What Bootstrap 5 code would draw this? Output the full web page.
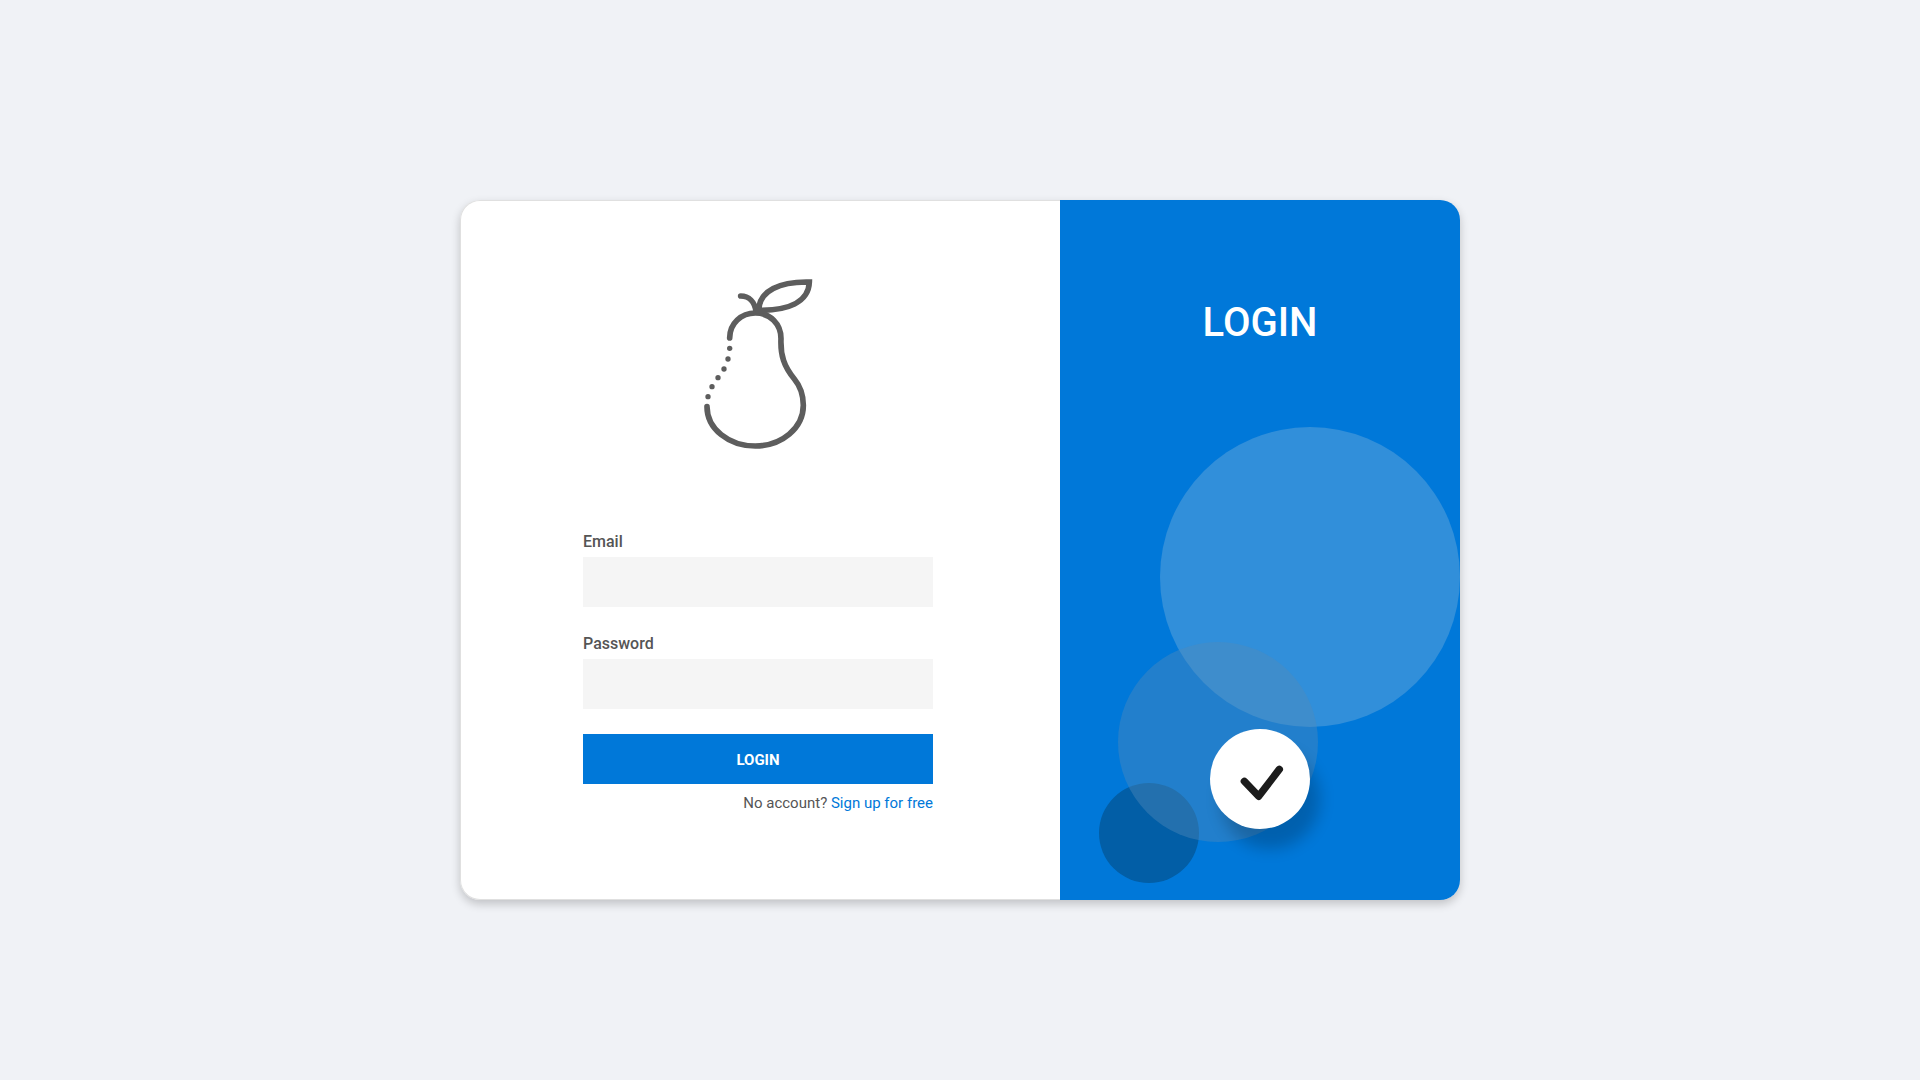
<!DOCTYPE html>
<html lang="en">
<head>
<meta charset="utf-8">
<meta name="viewport" content="width=device-width, initial-scale=1">
<title>Login</title>
<link href="https://cdn.jsdelivr.net/npm/bootstrap@5.3.0/dist/css/bootstrap.min.css" rel="stylesheet">
<style>
  body { background: #f0f2f6; font-family: Roboto, "Liberation Sans", sans-serif; color: #555; }
  .page { padding-top: 20px; }
  .login-card { width: 100%; max-width: 1000px; min-height: 700px; border-radius: 20px; box-shadow: 0 4px 10px rgba(0, 0, 0, .2); }
  .form-side { width: 60%; border: 1px solid #e0e0e0; border-right: 0; border-radius: 20px 0 0 20px; padding: 59px 5px 0 0; }
  .brand-side { width: 40%; background: #0078d9; border-radius: 0 20px 20px 0; padding-top: 99px; }
  .pear { width: 160px; height: 200px; margin-bottom: 70px; }
  .login-form { width: 350px; max-width: 100%; }
  .field-group { margin-bottom: 25px; }
  .field-group label { font-size: 16px; line-height: 23px; font-weight: 500; margin-bottom: 4px; }
  .field-group .form-control { height: 50px; background: #f5f5f5; }
  .btn-login { --bs-btn-color: #fff; --bs-btn-bg: #0078d9; --bs-btn-hover-color: #fff; --bs-btn-hover-bg: #0069be; height: 50px; padding: 8px 12px 6px; font-size: 15px; font-weight: 700; }
  .signup { font-size: 15px; line-height: 22px; margin-top: 8px; }
  .signup a { color: #0078d9; }
  .brand-title { font-size: 40px; line-height: 48px; font-weight: 500; }
  .bubble { border-radius: 50%; position: absolute; }
  .bubble-large { width: 300px; height: 300px; right: 0; bottom: 173px; background: #318fda; }
  .bubble-dark { width: 100px; height: 100px; left: 39px; bottom: 17px; background: #025ea6; }
  .bubble-mid { width: 200px; height: 200px; left: 58px; bottom: 58px; background: rgba(81, 139, 186, .42); }
  .bubble-check { width: 100px; height: 100px; left: 150px; bottom: 71px; background: #fff; box-shadow: 10px 20px 15px rgba(0, 0, 0, .2); }
</style>
<script src="https://cdn.jsdelivr.net/npm/bootstrap@5.3.0/dist/js/bootstrap.bundle.min.js" defer></script>
</head>
<body>
<main class="page min-vh-100 d-flex align-items-center justify-content-center">
  <div class="login-card d-flex">
    <section class="form-side bg-white d-flex flex-column align-items-center">
      <svg class="pear" viewBox="-6 0 480 600" fill="none" stroke="#5d5d5d" stroke-width="17" role="img" aria-label="Pear">
        <path stroke-linecap="round" stroke-linejoin="round" d="M149 234C149 190 184 159 226 159C270 159 303 192 303 236C301 286 312 320 343 357C362 380 370 405 370 436C370 504 306 558 226 558C146 558 81 506 81 440"/>
        <path stroke-linecap="round" d="M182 108C207 108 224 126 228 154"/>
        <path d="M236 151C238 92 300 64 388 66C386 128 322 151 236 151Z"/>
        <g fill="#5d5d5d" stroke="none"><circle cx="149" cy="265" r="8"/><circle cx="144" cy="297" r="8"/><circle cx="132" cy="327" r="8"/><circle cx="114" cy="353" r="8"/><circle cx="96" cy="380" r="8"/><circle cx="84" cy="410" r="8"/></g>
      </svg>
      <form class="login-form">
        <div class="field-group">
          <label class="d-block" for="email">Email</label>
          <input class="form-control border-0 rounded-0" type="email" id="email">
        </div>
        <div class="field-group">
          <label class="d-block" for="password">Password</label>
          <input class="form-control border-0 rounded-0" type="password" id="password">
        </div>
        <button class="btn btn-login w-100 border-0 rounded-0" type="submit">LOGIN</button>
        <p class="signup text-end mb-0">No account? <a class="text-decoration-none" href="#">Sign up for free</a></p>
      </form>
    </section>
    <section class="brand-side position-relative text-center text-white">
      <h1 class="brand-title mb-0">LOGIN</h1>
      <div class="bubble bubble-large"></div>
      <div class="bubble bubble-dark"></div>
      <div class="bubble bubble-mid"></div>
      <div class="bubble bubble-check">
        <svg class="d-block w-100 h-100" viewBox="0 0 300 300" fill="none" stroke="#1c1c1c" stroke-width="22" stroke-linecap="round" stroke-linejoin="round" aria-hidden="true"><path d="M103 157L146 202L208 121"/></svg>
      </div>
    </section>
  </div>
</main>
</body>
</html>
